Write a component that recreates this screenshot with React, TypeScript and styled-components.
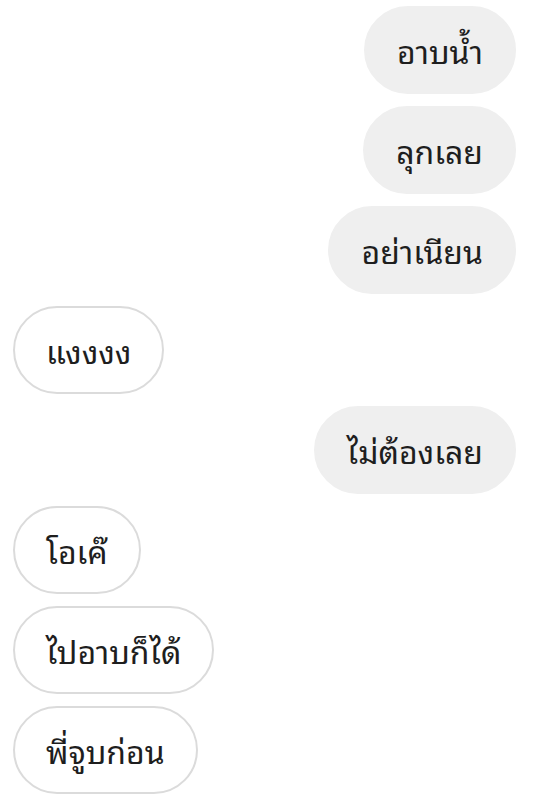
import React from 'react';
import styled, { createGlobalStyle } from 'styled-components';

type Side = 'me' | 'them';

const messages: { side: Side; text: string }[] = [
    { side: 'me', text: 'อาบน้ำ' },
    { side: 'me', text: 'ลุกเลย' },
    { side: 'me', text: 'อย่าเนียน' },
    { side: 'them', text: 'แงงงง' },
    { side: 'me', text: 'ไม่ต้องเลย' },
    { side: 'them', text: 'โอเค๊' },
    { side: 'them', text: 'ไปอาบก็ได้' },
    { side: 'them', text: 'พี่จูบก่อน' },
];

const GlobalStyle = createGlobalStyle`
    body {
        margin: 0;
        background: #ffffff;
        font-family: "Noto Sans Thai Looped", "Noto Sans Thai UI", "Noto Sans Thai", "Noto Sans", "Liberation Sans", sans-serif;
    }
`

export default function App() {
    return (
        <>
            <GlobalStyle />
            <StyledThread>
                {messages.map((m, i) => (
                    <StyledRow key={i} side={m.side}>
                        <StyledBubble side={m.side}>{m.text}</StyledBubble>
                    </StyledRow>
                ))}
            </StyledThread>
        </>
    );
}

const StyledThread = styled.div`
    display: flex;
    flex-direction: column;
    gap: 12px;
    padding: 6px 24px 0 13px;
`

const StyledRow = styled.div<{ side: Side }>`
    display: flex;
    justify-content: ${props => props.side === 'me' ? 'flex-end' : 'flex-start'};
`

const StyledBubble = styled.div<{ side: Side }>`
    box-sizing: border-box;
    height: 88px;
    display: flex;
    align-items: center;
    padding: 0 31px 2px;
    border-radius: 44px;
    font-size: 32px;
    color: #1e1e1e;
    background-color: ${props => props.side === 'me' ? '#efefef' : '#ffffff'};
    border: 2px solid ${props => props.side === 'me' ? '#efefef' : '#dbdbdb'};
    white-space: nowrap;
`
